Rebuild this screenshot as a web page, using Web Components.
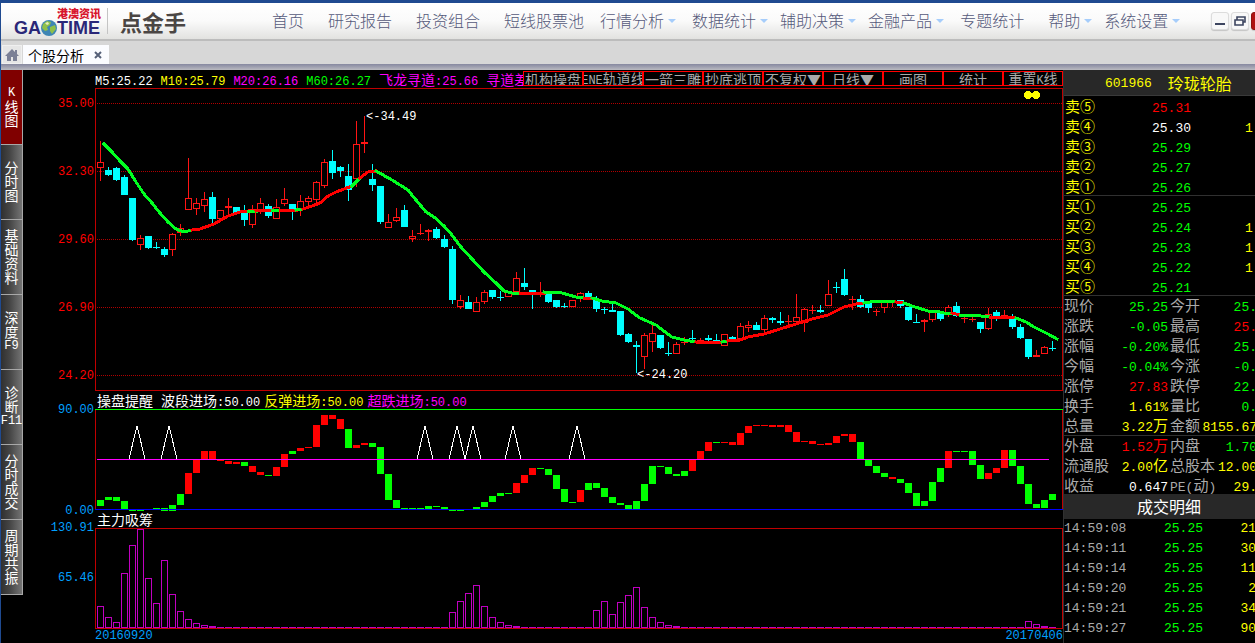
<!DOCTYPE html>
<html lang="zh-CN">
<head>
<meta charset="utf-8">
<title>点金手 - 个股分析</title>
<style>
  html, body { margin: 0; height: 100%; }
  body {
    background: #000; overflow: hidden;
    font: 14px/16px "Noto Sans CJK SC", sans-serif;
    --mono: "Liberation Mono", "Noto Sans CJK SC", monospace;
    --red: #ff0000; --green: #00ff00; --yellow: #ffff00; --magenta: #ff00ff; --grey: #aaaaaa; --frame: #c00000;
  }
</style>
</head>
<body>
<trade-app></trade-app>

<script>
const define = (name, html, setup) => {
  const tpl = document.createElement('template');
  tpl.innerHTML = html;
  customElements.define(name, class extends HTMLElement {
    constructor() {
      super();
      this.attachShadow({ mode: 'open' }).append(tpl.content.cloneNode(true));
    }
    connectedCallback() { if (setup) setup(this.shadowRoot, this); }
  });
};

/* Latin runs are set in the fixed-width face, one step smaller than the Chinese text. */
const esc = s => s.replace(/&/g, '&amp;').replace(/</g, '&lt;');
const mix = s => s.replace(/[\x21-\x7e]+/g, m => `<span class="n">${esc(m)}</span>`);

/* ---------- header ---------- */
define('brand-logo', `
<style>
  :host { display: flex; align-items: center; flex: none; width: 258px; padding-bottom: 1px; }
  .logo { margin-left: 13px; width: 87px; color: #2a2778; }
  .cn { display: block; text-align: right; font: 900 11px/14px "Noto Sans CJK SC", sans-serif; color: #d8142c; }
  .en { display: flex; align-items: center; font: bold 18px/16px "Liberation Sans", sans-serif; }
  svg { display: block; flex: none; }
  hr { margin: 0 0 0 6px; width: 1px; height: 26px; border: 0; background: #c4c4c4; }
  .name { margin-left: 12px; font: bold 22px/26px "Noto Sans CJK SC", sans-serif; color: #4b4644; }
</style>
<div class="logo">
  <span class="cn">港澳资讯</span>
  <span class="en">GA<svg width="16" height="16" viewBox="0 0 16 16"><circle cx="8" cy="8" r="8" fill="#3f86b4"/><path d="M2 4l4-3 4 1-1 3-3 2 1 3-3 1-3-3zM9 7l5-2 1 4-4 5-2-3z" fill="#8fc04a"/><path d="M4 3l3-1 1 2-2 1z" fill="#e8efc0"/></svg>TIME</span>
</div>
<hr>
<span class="name">点金手</span>`);

define('main-menu', `
<style>
  :host { display: block; flex: 1; padding-bottom: 3px; }
  nav { display: flex; gap: 24px; margin-left: 13px; }
  a { display: flex; align-items: center; color: #55597a; font: 16px/22px "Noto Sans CJK SC", sans-serif; font-weight: 300; text-decoration: none; white-space: nowrap; }
  a.near { margin-left: -8px; }
  a.far { margin-left: 4px; }
  a.more::after { content: ""; margin: 2px -12px 0 4px; border: 4px solid transparent; border-top-color: #a6cdfb; border-bottom: 0; }
</style>
<nav>
  <a href="#">首页</a><a href="#">研究报告</a><a href="#">投资组合</a><a href="#">短线股票池</a>
  <a href="#" class="near more">行情分析</a><a href="#" class="far more">数据统计</a>
  <a href="#" class="more">辅助决策</a><a href="#" class="more">金融产品</a>
  <a href="#" class="far">专题统计</a><a href="#" class="more">帮助</a><a href="#" class="more">系统设置</a>
</nav>`);

define('window-controls', `
<style>
  :host { display: flex; flex: none; gap: 2px; width: 44px; }
  button { flex: none; width: 18px; height: 18px; padding: 0; border: 1px solid #dcdcdc; border-radius: 3px; background: #f8f8f8; box-shadow: 0 1px 1px #c4c4c4; }
  button.close { background: #b01010; border-color: #8c1010; }
  svg { display: block; }
</style>
<button aria-label="最小化"><svg width="16" height="16"><path d="M3 10h10v2H3z" fill="#3d4560"/></svg></button>
<button aria-label="还原"><svg width="16" height="16"><path d="M5 7V4h8v5h-2M3 7h8v5H3z" fill="none" stroke="#3d4560" stroke-width="1.6"/></svg></button>
<button class="close" aria-label="关闭"></button>`);

define('app-header', `
<style>
  :host { display: flex; align-items: center; box-sizing: border-box; height: 41px; overflow: hidden;
    border-top: 3px solid #1f4a90; border-bottom: 2px solid #bcbcbc;
    background: linear-gradient(#ffffff, #fafafa 50%, #e2e2e0); }
</style>
<brand-logo></brand-logo><main-menu></main-menu><window-controls></window-controls>`);

define('tab-strip', `
<style>
  :host { display: flex; align-items: flex-end; box-sizing: border-box; height: 29px; padding: 0 0 6px 1px; gap: 1px;
    background: linear-gradient(#8688a0, #babac0) bottom / 100% 6px no-repeat #d7d7d7; }
  button { border: 0; padding: 0; display: flex; align-items: center; height: 19px; color: #000; font: 14px/18px "Noto Sans CJK SC", sans-serif; }
  .home { width: 20px; justify-content: center; background: #e6e6e6; border: 1px solid #f0f0f0; }
  .tab { padding: 0 7px 0 5px; gap: 10px; background: #fbfcff; }
</style>
<button class="home" aria-label="主页"><svg width="14" height="14" viewBox="0 0 14 14"><path d="M7 1L0 8h2v5h4V9h2v4h4V8h2l-2-2V2h-2v2z" fill="#7b8096"/></svg></button>
<button class="tab">个股分析<svg width="8" height="8" viewBox="0 0 8 8"><path d="M1 1l6 6M7 1L1 7" stroke="#566078" stroke-width="2"/></svg></button>`);

/* ---------- left navigation ---------- */
define('side-nav', `
<style>
  :host { display: block; flex: none; width: 22px; }
  button { display: flex; writing-mode: vertical-rl; align-items: center; justify-content: center;
    box-sizing: border-box; width: 22px; height: 75px; padding: 0; overflow: hidden;
    border: 0; border-right: 1px solid #a8a8a8; border-bottom: 1px solid #a8a8a8; white-space: nowrap;
    background: linear-gradient(90deg, #303030, #444 40%, #747474); color: #fff;
    font: 14px/20px "Noto Sans CJK SC", sans-serif; }
  button.on { background: #800000; }
  .n { writing-mode: horizontal-tb; font: 12px/14px var(--mono); margin: 0 -1px; }
</style>
<nav></nav>`, root => {
  const items = ['K线图', '分时图', '基础资料', '深度F9', '诊断F11', '分时成交', '周期共振'];
  root.querySelector('nav').innerHTML = items.map((t, i) => `<button${i ? '' : ' class="on"'}>${mix(t)}</button>`).join('');
});

/* ---------- charts ---------- */
define('chart-toolbar', `
<style>
  :host { display: flex; height: 18px; padding-left: 72px; }
  .legend { flex: 1; min-width: 0; overflow: hidden; display: flex; gap: 8px; white-space: nowrap; font: 14px/18px "Noto Sans CJK SC", sans-serif; }
  .n { font: 12px/14px var(--mono); }
  .tools { display: flex; flex: none; margin-top: 1px; }
  button { display: flex; align-items: center; justify-content: center; box-sizing: border-box; width: 60px; height: 15px; padding: 0; overflow: hidden;
    border: 1px solid var(--red); background: #000; color: var(--grey); white-space: nowrap; font: 14px/14px "Noto Sans CJK SC", sans-serif; }
  button .n { line-height: 12px; }
</style>
<div class="legend"></div><div class="tools"></div>`, root => {
  const legend = [['#fff', 'M5:25.22'], ['#ff0', 'M10:25.79'], ['#f0f', 'M20:26.16'], ['#0f0', 'M60:26.27'], ['#f0f', '飞龙寻道:25.66'], ['#f0f', '寻道差']];
  root.querySelector('.legend').innerHTML = legend.map(([c, t]) => `<span style="color:${c}">${mix(t)}</span>`).join('');
  root.querySelector('.tools').innerHTML = ['机构操盘', 'ENE轨道线', '一箭三雕', '抄底逃顶', '不复权▼', '日线▼', '画图', '统计', '重置K线']
    .map(t => `<button><span>${mix(t)}</span></button>`).join('');
});

define('chart-panel', `
<style>
  :host { display: grid; grid-template-columns: 72px minmax(0, 1fr); color: var(--axis, #00a0ff); }
  .title { grid-column: 2; padding-left: 2px; display: flex; gap: 4px; color: #fff; white-space: nowrap; overflow: hidden; }
  .axis { grid-column: 1; display: flex; flex-direction: column; text-align: right; padding-right: 1px; font: 12px/16px var(--mono); }
  .plot { grid-column: 2; min-width: 0; position: relative; }
  ::slotted(svg) { display: block; width: 100%; }
</style>
<div class="title"><slot name="title"></slot></div>
<div class="axis" part="axis"><slot name="axis"></slot></div>
<div class="plot"><slot></slot></div>`);

/* high, body top, body bottom, low; R rising, C falling */
const candles = `R141,162,168,181 C167,170,175,176 C167,168,180,181 C175,177,195,195 C198,198,240,241 R235,238,245,250 C236,236,248,249 C242,247,248,249 C247,249,255,257 R233,234,250,256
R224,228,233,236 R158,198,210,210 R198,203,209,215 R192,199,206,212 C192,197,219,223 R210,210,219,219 R198,206,208,215 C207,207,213,213 C205,211,220,226 R205,209,225,228
R198,203,210,214 C204,206,216,218 R199,207,219,219 R188,199,204,206 C204,204,210,220 R195,201,209,216 R196,198,202,209 R181,182,200,205 R159,162,186,188 C150,161,173,179
C166,167,171,177 C164,176,190,201 R121,144,179,187 R116,142,144,153 C164,179,185,191 C186,186,222,224 R214,222,228,228 R208,217,221,222 C205,210,227,227 R230,236,239,242
R224,233,234,235 R229,230,232,241 C227,229,238,239 C235,239,247,248 C246,249,300,304 R295,300,307,309 C296,302,309,309 R297,302,312,312 R290,292,302,304 C290,290,297,299
C291,297,298,301 R292,292,297,297 R272,278,292,292 C268,283,287,290 C290,290,294,309 R282,292,294,297 C294,294,302,303 C300,300,307,308 C303,306,307,308 R300,300,307,307
R292,293,299,302 C291,293,297,297 C296,300,309,312 C307,309,310,314 C303,310,312,312 C311,311,335,336 C333,334,342,343 C341,345,347,373 R333,335,357,369 R325,333,342,352
C335,335,348,349 C342,353,354,356 R342,344,354,354 R337,342,343,345 C330,338,339,340 R338,340,342,342 C335,338,340,341 C334,340,342,342 R334,334,346,346 C336,337,340,340
R323,326,339,339 R321,325,328,332 C322,325,330,330 R315,318,330,332 C317,318,320,323 C312,321,323,325 R315,321,322,326 R294,317,322,324 R308,309,323,332 R305,310,311,314
C305,310,312,313 R280,294,306,306 C282,287,288,293 C269,279,295,296 R296,299,300,310 C295,299,307,308 C303,303,308,313 R309,311,312,316 R302,302,308,313 R300,300,302,307
C300,300,306,308 C307,307,320,321 C314,322,323,323 R319,320,322,332 R312,312,320,322 C312,312,319,321 R305,307,314,317 C302,306,316,317 R317,318,319,323 R317,319,320,322
C322,322,329,333 R308,314,329,330 C310,312,317,321 R310,315,316,316 C314,318,327,329 C324,327,338,339 C339,339,357,359 R350,355,357,357 R346,347,354,354 C341,348,349,351`;

const trend = `G104,144 112,152 120,161 128,169 136,182 144,194 152,203 160,213 168,222 176,229 184,232 192,230
R192,230 200,229 214,224 228,216 240,212 248,211
G248,211 256,211
R256,211 272,210
G272,210 280,210
R280,210 296,210
G296,210 303,209
R303,209 312,206 320,203 328,196 336,192 344,189 352,186
G352,186 360,178
R360,178 368,172 376,171
G376,171 392,180 408,190 416,200 426,212 434,217 444,226 452,235 460,246 472,259 484,272 496,283 504,291 512,293 520,293
R520,293 544,293
G544,292 562,293 576,297 584,298
R584,298 592,298
G592,298 602,301 616,303 628,309 640,318 656,325 672,337 684,340 696,342
R696,342 716,343 722,342
G722,342 728,341
R728,341 740,340 748,337 764,334 780,329 796,324 812,319 828,315 844,307 856,304 864,303
G864,303 870,302 880,301 896,302
R896,302 904,303
G904,303 912,306 928,311 940,312 944,313 952,313
R952,313 960,315
G960,315 972,315 990,317
R990,317 1008,317 1016,318
G1016,318 1026,322 1034,327 1048,334 1057,339`;

/* stepped oscillator: colour, top, bottom */
const steps = `G500,506 G497,500 G497,501 G501,509 G510,511 G510,511 G509,510 G508,509 G508,511 G505,511 G494,505 R473,494 R459,473 R451,459 R451,459 R459,461 R461,464 R462,464 G462,466 R466,472
R472,475 G475,476 R467,476 R454,467 G451,454 R448,451 R447,448 R425,447 R415,425 R415,419 R419,429 G429,448 R445,448 R443,445 G443,447 G447,474 G474,500 G500,508 G508,509 G508,509
G508,509 G506,509 G506,507 G507,509 G510,511 G510,511 G509,510 G507,509 G502,507 G496,502 G493,496 G493,494 R483,493 R475,483 R468,475 G468,469 G469,475 G475,489 G489,502 G502,503
R490,502 G483,490 G483,488 G488,497 G497,503 G503,505 G505,509 G501,509 G484,501 G466,484 G466,467 G467,474 G474,476 G471,476 R459,471 R451,459 R442,451 G442,443 R442,443 R442,445
R433,445 R426,433 R425,426 R425,426 R425,427 R425,427 R425,432 R432,442 R441,442 R441,444 R444,445 R443,445 R436,443 R434,436 R434,442 G442,459 G460,466 G466,473 G473,477 R477,479
G479,483 G483,493 G493,506 G501,506 G482,501 G468,482 R451,468 G451,452 G451,452 G451,465 G465,479 R473,479 R468,473 R450,468 G450,466 G466,484 G484,504 G504,508 G500,508 G494,500`;

const volumes = { 0: 606, 1: 617, 2: 622, 3: 573, 4: 545, 5: 529, 6: 578, 7: 603, 8: 560, 9: 594, 10: 611, 11: 619, 12: 623, 13: 625, 14: 626,
  44: 612, 45: 601, 46: 593, 47: 585, 48: 606, 49: 617, 50: 622, 51: 625, 52: 626,
  62: 610, 63: 601, 64: 614, 65: 602, 66: 595, 67: 587, 68: 607, 69: 617, 70: 622, 71: 625, 72: 626, 116: 621, 117: 624, 118: 626 };

const box = (x, y, w, h, c) => `<rect x="${x}" y="${y}" width="${w}" height="${h}" fill="${c}"/>`;
const hollow = (x, top, bottom, c) => bottom - top < 3 ? box(x, top, 7, bottom - top, c)
  : box(x, top, 7, bottom - top, c) + box(x + 1, top + 1, 5, bottom - top - 2, '#000');
const frame = (top, bottom) => box(95, top, 968, 1, '#c00000') + box(95, bottom, 968, 1, '#c00000')
  + box(95, top, 1, bottom - top, '#c00000') + box(1062, top, 1, bottom - top, '#c00000');

function priceChart() {
  let s = '';
  for (const y of [103, 171, 239, 307, 375]) s += `<path d="M97 ${y}.5H1062" stroke="#b00000" stroke-dasharray="1 1"/>`;
  s += frame(88, 390);
  candles.split(/\s+/).forEach((t, i) => {
    const [hi, top, bottom, lo] = t.slice(1).split(',').map(Number), x = 97 + 8 * i;
    const up = t[0] === 'R', c = up ? '#ff1414' : '#00ffff';
    s += box(x + 3, hi, 1, lo - hi, c) + (up ? hollow(x, top, bottom, c) : box(x, top, 7, bottom - top, c));
  });
  for (const l of trend.split('\n'))
    s += `<polyline points="${l.slice(1)}" fill="none" stroke="${l[0] === 'G' ? '#00ff20' : '#ff0000'}" stroke-width="3" stroke-linecap="square"/>`;
  return s + '<circle cx="1028" cy="95" r="4" fill="#ff0"/><circle cx="1036" cy="95" r="4" fill="#ff0"/>';
}
function stepChart() {
  let s = box(95, 409, 1, 101, '#c00000') + box(1062, 409, 1, 101, '#c00000');
  steps.split(/\s+/).forEach((t, i) => {
    const [top, bottom] = t.slice(1).split(',').map(Number);
    s += box(97 + 8 * i, top, 7, bottom - top, t[0] === 'G' ? '#00ff00' : '#ff0000');
  });
  for (const x of [137, 169, 425, 457, 473, 513, 577]) s += `<path d="M${x - 8} 459L${x} 426L${x + 8} 459" fill="none" stroke="#fff"/>`;
  return s + box(95, 409, 968, 1, '#00ff00') + box(97, 459, 952, 1, '#ff00ff') + box(95, 509, 968, 1, '#0000ff');
}
function volumeChart() {
  let s = frame(528, 628);
  for (let i = 0; i < 120; i++) s += hollow(97 + 8 * i, volumes[i] || 627, 628, '#c000c0');
  return s;
}
const svg = (top, height, body) =>
  `<svg viewBox="95 ${top} 968 ${height}" height="${height}" preserveAspectRatio="none" shape-rendering="crispEdges">${body}</svg>`;

define('chart-stack', `
<style>
  :host { display: block; flex: 1; min-width: 0; background: #000; }
  .price { --axis: #ff0000; }
  .price::part(axis) { padding-top: 8px; padding-bottom: 7px; justify-content: space-between; }
  .step::part(axis) { margin: -7px 0 -8px; justify-content: space-between; }
  .volume::part(axis) { margin-top: -7px; gap: 34px; }
  .t { height: 18px; font: 14px/18px "Noto Sans CJK SC", sans-serif; }
  .t.low { height: 16px; line-height: 16px; }
  .t.head { margin-right: 4px; }
  .n { font: 12px/14px var(--mono); }
  .mark { position: absolute; color: #fff; font: 12px/16px var(--mono); }
  .high { left: 28%; top: 21px; }
  .bottom { left: 56%; top: 279px; }
  footer { display: flex; justify-content: space-between; margin-left: 72px; color: #00a0ff; font: 12px/14px var(--mono); height: 14px; }
</style>
<chart-toolbar></chart-toolbar>
<chart-panel class="price"></chart-panel>
<chart-panel class="step"></chart-panel>
<chart-panel class="volume"></chart-panel>
<footer><span>20160920</span><span>20170406</span></footer>`, root => {
  const axis = a => a.map(v => `<span slot="axis">${v}</span>`).join('');
  const title = (t, c, k = '') => `<span slot="title" class="t ${k}" style="color:${c}">${mix(t)}</span>`;
  root.querySelector('.price').innerHTML = axis(['35.00', '32.30', '29.60', '26.90', '24.20']) + svg(88, 303, priceChart())
    + '<span class="mark high">&lt;-34.49</span><span class="mark bottom">&lt;-24.20</span>';
  root.querySelector('.step').innerHTML = title('操盘提醒', '#fff', 'head') + title('波段进场:50.00', '#fff') + title('反弹进场:50.00', '#ff0')
    + title('超跌进场:50.00', '#f0f') + axis(['90.00', '0.00']) + svg(409, 102, stepChart());
  root.querySelector('.volume').innerHTML = title('主力吸筹', '#fff', 'low') + axis(['130.91', '65.46']) + svg(527, 102, volumeChart());
});

/* ---------- quote column ---------- */
define('quote-panel', `
<style>
  :host { display: block; flex: none; box-sizing: border-box; width: 192px; overflow: hidden; border-left: 1px solid #303030; background: #000;
    white-space: nowrap; font: 15px/20px "Noto Sans CJK SC", sans-serif; color: var(--grey); }
  .n { font: 13px/14px var(--mono); }
  h2 { box-sizing: border-box; margin: 0; background: #282828; font: 16px/26px "Noto Sans CJK SC", sans-serif; }
  .stock { display: flex; gap: 16px; height: 26px; padding-left: 41px; color: var(--yellow); border-bottom: 1px solid #3a3a3a; }
  .stock .n { line-height: 28px; }
  .deals { height: 25px; margin-top: -2px; padding-left: 73px; color: #fff; line-height: 25px; position: relative; }
  table { width: 192px; table-layout: fixed; border-collapse: collapse; }
  th, td { padding: 0; height: 20px; line-height: 20px; text-align: left; font-weight: normal; }
  th { padding-left: 1px; color: var(--yellow); }
  .rule { box-shadow: inset 0 -1px #303030; }
  td.v { color: var(--yellow); }
  .book { line-height: 20px; height: 200px; }
  .book th, .book td { line-height: 18px; }
  .trades { color: var(--grey); }
  .trades td { font: 13px/20px var(--mono); }
  .trades td.v { text-align: right; }
  .stats { margin: 0; width: 193px; }
  .stats > div { display: grid; grid-template-columns: 104px 87px; column-gap: 2px; height: 20px; }
  .pair { display: flex; justify-content: space-between; height: 20px; line-height: 18px; }
  dt, dd { margin: 0; }
  .r { color: var(--red); } .g { color: var(--green); } .w { color: #fff; } .y { color: var(--yellow); }
</style>
<h2 class="stock"><span class="n">601966</span><span>玲珑轮胎</span></h2>
<table class="book"><colgroup><col style="width:88px"><col style="width:93px"><col></colgroup><tbody></tbody></table>
<dl class="stats"></dl>
<h2 class="deals">成交明细</h2>
<table class="trades"><colgroup><col style="width:100px"><col style="width:60px"><col></colgroup><tbody></tbody></table>`, root => {
  const book = [['卖⑤', '25.31', 'r', ''], ['卖④', '25.30', 'w', '1'], ['卖③', '25.29', 'g', ''], ['卖②', '25.27', 'g', ''], ['卖①', '25.26', 'g', ''],
    ['买①', '25.25', 'g', ''], ['买②', '25.24', 'g', '1'], ['买③', '25.23', 'g', '1'], ['买④', '25.22', 'g', '1'], ['买⑤', '25.21', 'g', '']];
  root.querySelector('.book tbody').innerHTML = book.map(([k, p, c, v], i) =>
    `<tr${i % 5 === 4 ? ' class="rule"' : ''}><th scope="row">${k}</th><td class="${c}">${mix(p)}</td><td class="v">${mix(v)}</td></tr>`).join('');
  const stats = [['现价', '25.25', 'g', '今开', '25.', 'g'], ['涨跌', '-0.05', 'g', '最高', '25.', 'r'], ['涨幅', '-0.20%', 'g', '最低', '25.', 'g'],
    ['今幅', '-0.04%', 'g', '今涨', '-0.', 'g'], ['涨停', '27.83', 'r', '跌停', '22.', 'g'], ['换手', '1.61%', 'y', '量比', '0.', 'g'],
    ['总量', '3.22万', 'y', '金额', '8155.67', 'y'], ['外盘', '1.52万', 'r', '内盘', '1.70', 'g'], ['流通股', '2.00亿', 'y', '总股本', '12.00', 'y'],
    ['收益', '0.647', 'w', 'PE(动)', '29.', 'y']];
  const pair = (k, v, c) => `<div class="pair"><dt>${mix(k)}</dt><dd class="${c}">${mix(v)}</dd></div>`;
  root.querySelector('.stats').innerHTML = stats.map(([a, b, c, d, e, f], i) =>
    `<div${i === 6 ? ' class="rule"' : ''}>${pair(a, b, c)}${pair(d, e, f)}</div>`).join('');
  const trades = [['14:59:08', '21'], ['14:59:11', '30'], ['14:59:14', '11'], ['14:59:20', '2'], ['14:59:21', '34'], ['14:59:27', '90']];
  root.querySelector('.trades tbody').innerHTML = trades.map(([t, v]) =>
    `<tr><td>${t}</td><td class="g">25.25</td><td class="v">${v}</td></tr>`).join('');
});

define('trade-app', `
<style>
  :host { display: flex; flex-direction: column; box-sizing: border-box; height: 100vh; border-left: 1px solid #1f4a90; overflow: hidden; }
  app-header, tab-strip { flex: none; }
  main { flex: 1; min-height: 0; display: flex; overflow: hidden; }
</style>
<app-header></app-header>
<tab-strip></tab-strip>
<main><side-nav></side-nav><chart-stack></chart-stack><quote-panel></quote-panel></main>`);
</script>
</body>
</html>
